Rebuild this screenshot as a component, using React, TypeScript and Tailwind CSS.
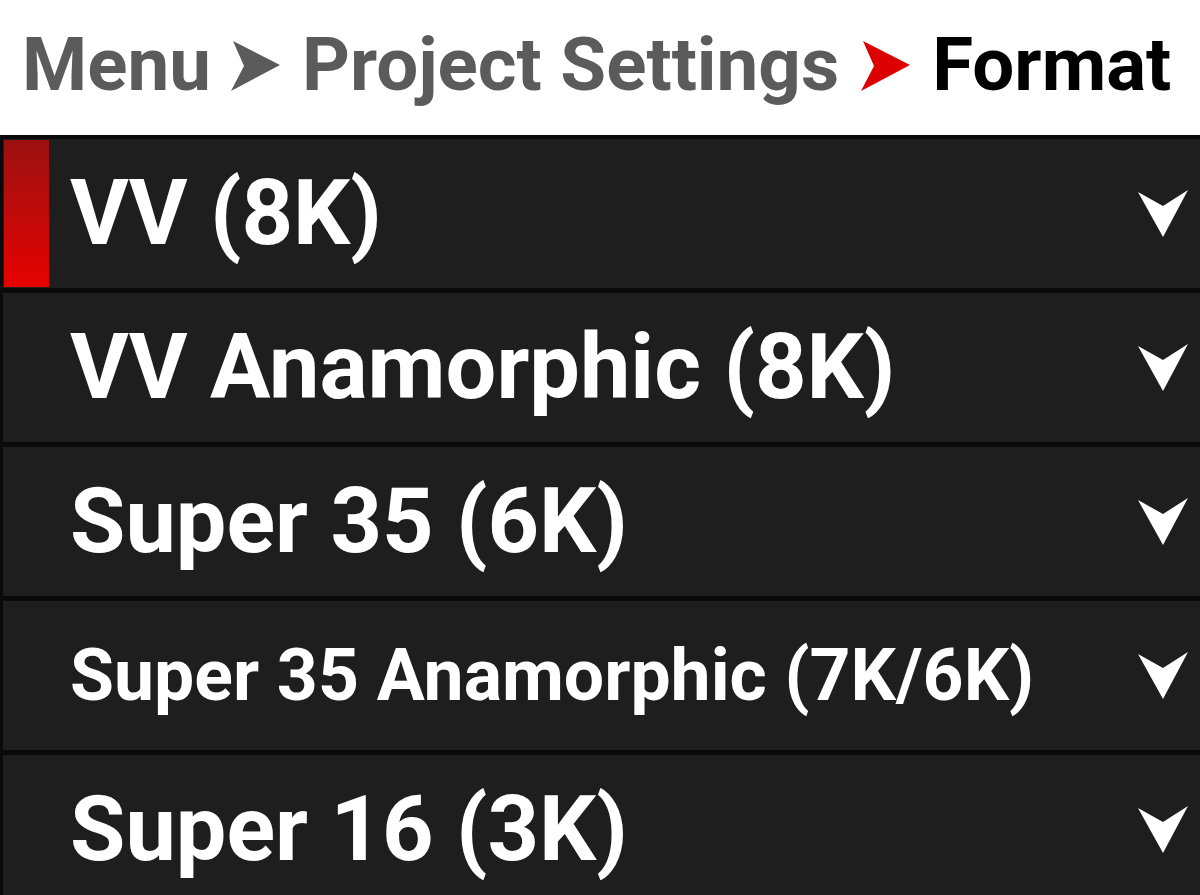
import React from "react";

const items = [
  { label: "VV (8K)", size: "text-[90px]", selected: true },
  { label: "VV Anamorphic (8K)", size: "text-[90px]", selected: false },
  { label: "Super 35 (6K)", size: "text-[90px]", selected: false },
  { label: "Super 35 Anamorphic (7K/6K)", size: "text-[71.5px]", selected: false },
  { label: "Super 16 (3K)", size: "text-[90px]", selected: false },
];

function Arrow({ color }: { color: string }) {
  return (
    <svg width="49" height="50" viewBox="0 0 49 50" className="shrink-0">
      <polygon points="2,0 49,24 0,50 13,25" fill={color} />
    </svg>
  );
}

function Chevron() {
  return (
    <svg width="50" height="47" viewBox="0 0 50 47" className="shrink-0">
      <polygon points="0,2 25,16 50,0 25,47" fill="#ffffff" />
    </svg>
  );
}

export default function App() {
  return (
    <div
      className="w-[1200px] h-[895px] overflow-hidden bg-white flex flex-col"
      style={{ fontFamily: "Roboto, 'Liberation Sans', sans-serif" }}
    >
      <div className="h-[135px] shrink-0 flex items-center pl-[22px] pb-[4px] font-bold text-[74.5px] leading-none">
        <span className="text-[#5b5b5b]">Menu</span>
        <span className="ml-[20px] mr-[22px] flex items-center">
          <Arrow color="#5b5b5b" />
        </span>
        <span className="text-[#5b5b5b]">Project Settings</span>
        <span className="mx-[22px] flex items-center">
          <Arrow color="#dd0000" />
        </span>
        <span className="text-black">Format</span>
      </div>
      <div className="flex-1 bg-[#0a0a0a] pt-[4px] pl-[3px] flex flex-col gap-[5px]">
        {items.map((it) => (
          <div
            key={it.label}
            className="h-[149px] shrink-0 bg-[#1e1e1e] flex items-center pl-[1px] pr-[12px]"
          >
            <div
              className={
                it.selected
                  ? "w-[45px] self-stretch my-[1px] bg-linear-to-b from-[#9c0f0f] to-[#e60000]"
                  : "w-[45px] self-stretch"
              }
            />
            <span
              className={`ml-[21px] flex-1 text-white font-bold leading-none whitespace-nowrap ${it.size}`}
            >
              {it.label}
            </span>
            <Chevron />
          </div>
        ))}
      </div>
    </div>
  );
}
